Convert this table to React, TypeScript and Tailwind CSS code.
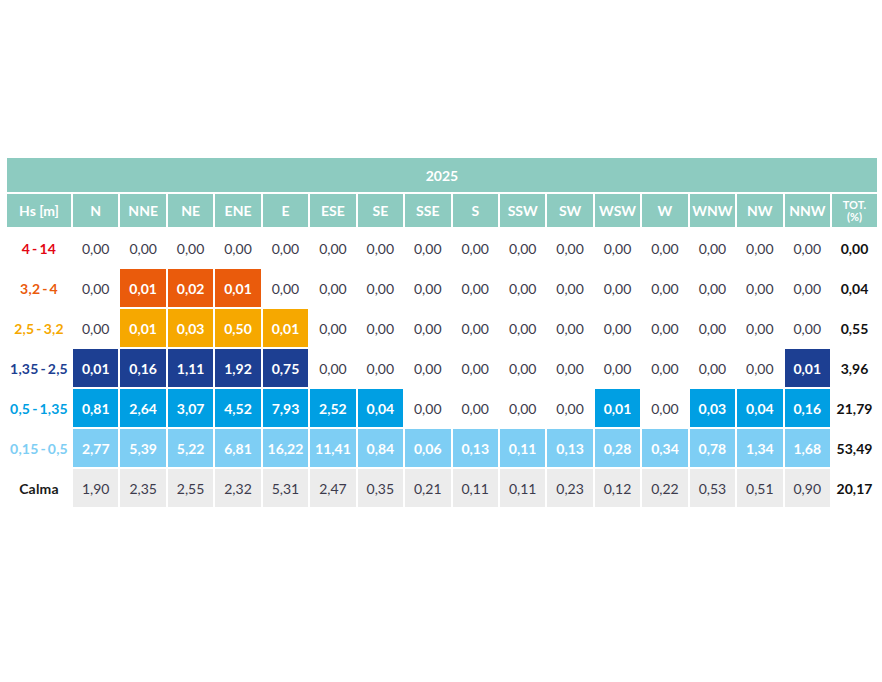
const dirs = ['N', 'NNE', 'NE', 'ENE', 'E', 'ESE', 'SE', 'SSE', 'S', 'SSW', 'SW', 'WSW', 'W', 'WNW', 'NW', 'NNW']

type Row = {
  label: string
  labelColor: string
  cellBg: string
  values: string[]
  tot: string
  calm?: boolean
}

const zeros = (n: number) => Array.from({ length: n }, () => '0,00')

const rows: Row[] = [
  { label: '4-14', labelColor: 'text-[#e30613]', cellBg: 'bg-[#e30613]', values: zeros(16), tot: '0,00' },
  {
    label: '3,2-4',
    labelColor: 'text-[#ea5b0c]',
    cellBg: 'bg-[#ea5b0c]',
    values: ['0,00', '0,01', '0,02', '0,01', ...zeros(12)],
    tot: '0,04',
  },
  {
    label: '2,5-3,2',
    labelColor: 'text-[#f6a800]',
    cellBg: 'bg-[#f6a800]',
    values: ['0,00', '0,01', '0,03', '0,50', '0,01', ...zeros(11)],
    tot: '0,55',
  },
  {
    label: '1,35-2,5',
    labelColor: 'text-[#1d3f92]',
    cellBg: 'bg-[#1d3f92]',
    values: ['0,01', '0,16', '1,11', '1,92', '0,75', ...zeros(10), '0,01'],
    tot: '3,96',
  },
  {
    label: '0,5-1,35',
    labelColor: 'text-[#009fe3]',
    cellBg: 'bg-[#009fe3]',
    values: ['0,81', '2,64', '3,07', '4,52', '7,93', '2,52', '0,04', '0,00', '0,00', '0,00', '0,00', '0,01', '0,00', '0,03', '0,04', '0,16'],
    tot: '21,79',
  },
  {
    label: '0,15-0,5',
    labelColor: 'text-[#7ecef4]',
    cellBg: 'bg-[#7ecef4]',
    values: ['2,77', '5,39', '5,22', '6,81', '16,22', '11,41', '0,84', '0,06', '0,13', '0,11', '0,13', '0,28', '0,34', '0,78', '1,34', '1,68'],
    tot: '53,49',
  },
  {
    label: 'Calma',
    labelColor: 'text-[#1a1a1a]',
    cellBg: 'bg-[#ececec]',
    values: ['1,90', '2,35', '2,55', '2,32', '5,31', '2,47', '0,35', '0,21', '0,11', '0,11', '0,23', '0,12', '0,22', '0,53', '0,51', '0,90'],
    tot: '20,17',
    calm: true,
  },
]

const Label = ({ text, color }: { text: string; color: string }) => (
  <div className={`h-[38px] flex items-center justify-center font-bold text-[14px] tracking-[0.2px] whitespace-nowrap ${color}`}>
    {text.replace(/-/g, '\u2009-\u2009')}
  </div>
)

export default function App() {
  return (
    <div className="min-h-[682px] bg-white pt-[158px] pl-[7px] pr-[5px] font-['Lato',sans-serif]">
      <div className="grid grid-cols-[64px_repeat(16,minmax(0,1fr))_45px] gap-[2px]">
        <div className="col-span-18 h-[34px] bg-[#8dcbc0] flex items-center justify-center text-white font-bold text-[14px]">
          2025
        </div>

        <div className="h-[33px] bg-[#8dcbc0] flex items-center justify-center text-white font-bold text-[14px]">
          Hs [m]
        </div>
        {dirs.map((d) => (
          <div key={d} className="h-[33px] bg-[#8dcbc0] flex items-center justify-center text-white font-bold text-[14px]">
            {d}
          </div>
        ))}
        <div className="h-[33px] bg-[#8dcbc0] flex flex-col items-center justify-center text-white font-bold text-[11px] leading-[12px]">
          <span>TOT.</span>
          <span>(%)</span>
        </div>

        {rows.map((r) => (
          <div key={r.label} className="contents">
            <Label text={r.label} color={r.labelColor} />
            {r.values.map((v, i) => {
              const filled = r.calm || v !== '0,00'
              return (
                <div
                  key={i}
                  className={`h-[38px] flex items-center justify-center text-[14px] ${
                    r.calm
                      ? 'bg-[#ececec] text-[#3c3b4c]'
                      : filled
                        ? `${r.cellBg} text-white font-bold`
                        : 'text-[#3c3b4c]'
                  }`}
                >
                  {v}
                </div>
              )
            })}
            <div className="h-[38px] flex items-center justify-center text-[14px] font-bold text-[#111]">
              {r.tot}
            </div>
          </div>
        ))}
      </div>
    </div>
  )
}
